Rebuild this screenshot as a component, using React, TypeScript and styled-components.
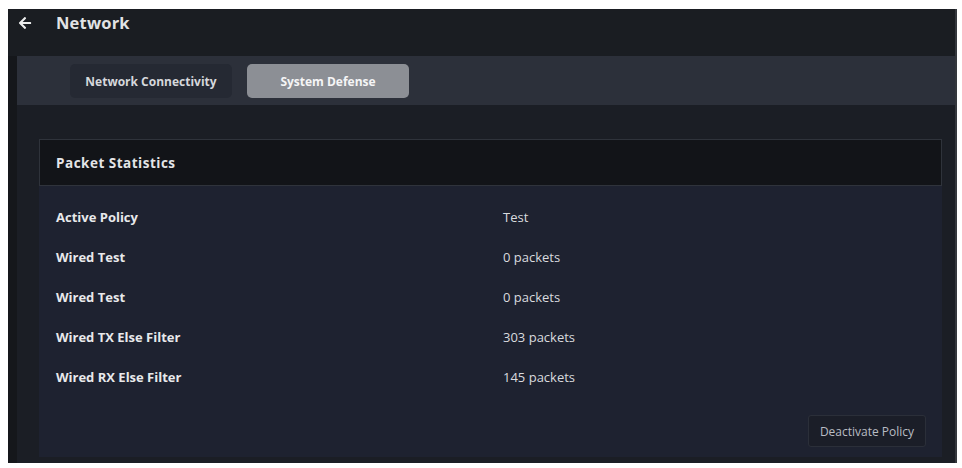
import React from "react";
import styled, { createGlobalStyle } from "styled-components";
import { FaArrowLeft } from "react-icons/fa";

const Global = createGlobalStyle`
  html, body { margin: 0; padding: 0; background: #ffffff; }
  body { font-family: "Open Sans", "Liberation Sans", sans-serif; }
  * { box-sizing: border-box; }
`;

const Frame = styled.div`
  margin: 9px 5px 0 8px;
  height: 454px;
  background: #1a1d22;
  border-right: 2px solid #34373d;
  display: flex;
  flex-direction: column;
  overflow: hidden;
`;

const Header = styled.header`
  height: 47px;
  display: flex;
  align-items: center;
  padding: 0 0 20px 10px;
  gap: 24px;
  color: #e2e3e5;
`;

const BackIcon = styled(FaArrowLeft)`
  width: 14px;
  height: 14px;
  color: #eceded;
`;

const Title = styled.h1`
  margin: 0;
  font-size: 16.5px;
  font-weight: 700;
  letter-spacing: 0.2px;
`;

const Body = styled.div`
  flex: 1;
  display: flex;
`;

const Rail = styled.div`
  width: 9px;
  background: #15171b;
`;

const Main = styled.div`
  flex: 1;
  display: flex;
  flex-direction: column;
  background: #1b1e25;
`;

const TabBar = styled.nav`
  height: 49px;
  background: #2c303a;
  display: flex;
  align-items: center;
  padding: 1px 0 0 53px;
  gap: 15px;
`;

const Tab = styled.button<{ $active?: boolean }>`
  height: 34px;
  width: 162px;
  border: none;
  border-radius: 5px;
  background: ${(p) => (p.$active ? "#8c8f95" : "#252933")};
  color: ${(p) => (p.$active ? "#f5f5f6" : "#d6d8dc")};
  font-family: "Open Sans", "Liberation Sans", sans-serif;
  font-size: 12px;
  font-weight: 700;
  cursor: pointer;
`;

const Card = styled.section`
  margin: 34px 13px 6px 22px;
  flex: 1;
  display: flex;
  flex-direction: column;
  background: #1e2230;
`;

const CardHeader = styled.div`
  height: 47px;
  background: #121418;
  border: 1px solid #2f333b;
  display: flex;
  align-items: center;
  padding-left: 16px;
  font-size: 13.5px;
  font-weight: 700;
  letter-spacing: 0.5px;
  color: #e4e5e7;
`;

const Stats = styled.div`
  display: grid;
  grid-template-columns: 447px 1fr;
  padding: 11px 0 0 17px;
`;

const Cell = styled.div<{ $label?: boolean }>`
  height: 40px;
  display: flex;
  align-items: center;
  font-size: 13px;
  font-weight: ${(p) => (p.$label ? 700 : 400)};
  color: ${(p) => (p.$label ? "#e8e9eb" : "#d9dbdf")};
`;

const Footer = styled.div`
  display: flex;
  justify-content: flex-end;
  padding: 18px 16px 0 0;
`;

const Button = styled.button`
  width: 118px;
  height: 32px;
  background: #1b1e28;
  border: 1px solid #2b2f39;
  border-radius: 3px;
  color: #b9bcc3;
  font-family: "Open Sans", "Liberation Sans", sans-serif;
  font-size: 12px;
  cursor: pointer;
`;

const rows: [string, string][] = [
  ["Active Policy", "Test"],
  ["Wired Test", "0 packets"],
  ["Wired Test", "0 packets"],
  ["Wired TX Else Filter", "303 packets"],
  ["Wired RX Else Filter", "145 packets"],
];

export default function App() {
  return (
    <>
      <Global />
      <Frame>
        <Header>
          <BackIcon />
          <Title>Network</Title>
        </Header>
        <Body>
          <Rail />
          <Main>
            <TabBar>
              <Tab>Network Connectivity</Tab>
              <Tab $active>System Defense</Tab>
            </TabBar>
            <Card>
              <CardHeader>Packet Statistics</CardHeader>
              <Stats>
                {rows.map(([k, v], i) => (
                  <React.Fragment key={i}>
                    <Cell $label>{k}</Cell>
                    <Cell>{v}</Cell>
                  </React.Fragment>
                ))}
              </Stats>
              <Footer>
                <Button>Deactivate Policy</Button>
              </Footer>
            </Card>
          </Main>
        </Body>
      </Frame>
    </>
  );
}
